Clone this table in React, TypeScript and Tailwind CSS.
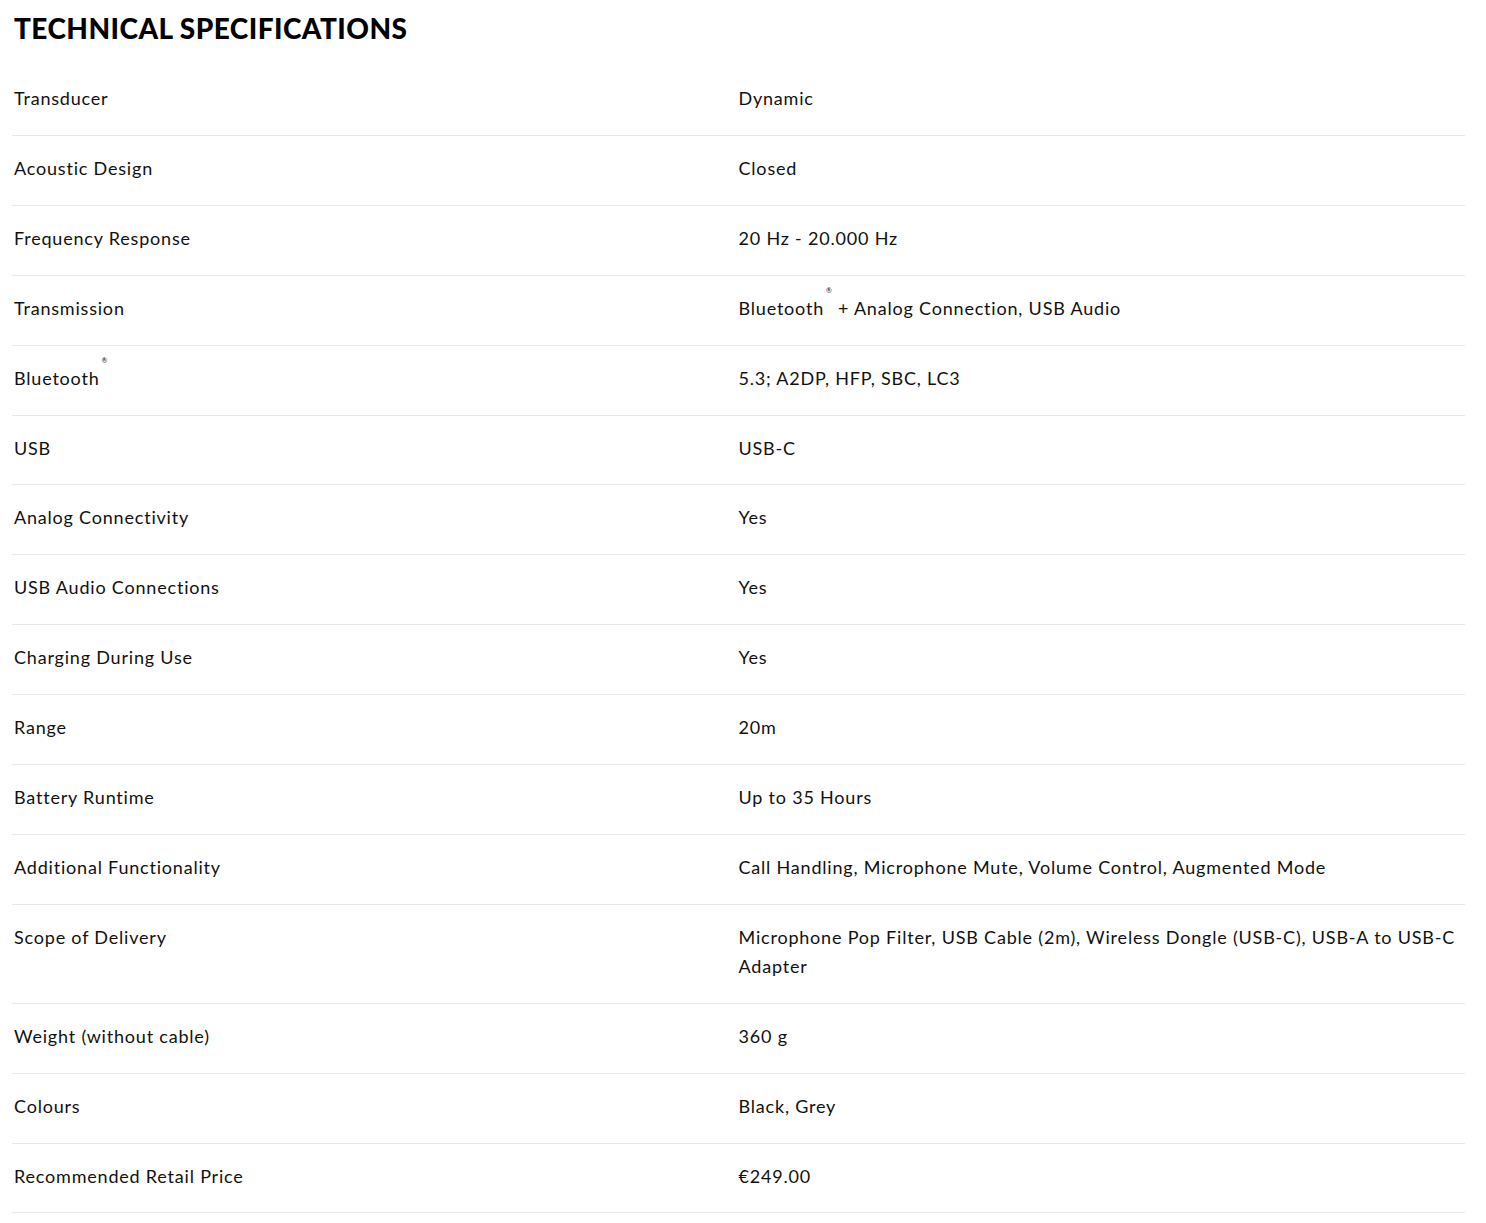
import React from "react";

type Row = { label: React.ReactNode; value: React.ReactNode };

const Reg = () => (
  <sup className="relative -top-[4px] ml-[2px] mr-[6px] text-[7px] align-top tracking-normal">®</sup>
);

const rows: Row[] = [
  { label: "Transducer", value: "Dynamic" },
  { label: "Acoustic Design", value: "Closed" },
  { label: "Frequency Response", value: "20 Hz - 20.000 Hz" },
  {
    label: "Transmission",
    value: (
      <>
        Bluetooth
        <Reg />+ Analog Connection, USB Audio
      </>
    ),
  },
  {
    label: (
      <>
        Bluetooth
        <Reg />
      </>
    ),
    value: "5.3; A2DP, HFP, SBC, LC3",
  },
  { label: "USB", value: "USB-C" },
  { label: "Analog Connectivity", value: "Yes" },
  { label: "USB Audio Connections", value: "Yes" },
  { label: "Charging During Use", value: "Yes" },
  { label: "Range", value: "20m" },
  { label: "Battery Runtime", value: "Up to 35 Hours" },
  {
    label: "Additional Functionality",
    value: "Call Handling, Microphone Mute, Volume Control, Augmented Mode",
  },
  {
    label: "Scope of Delivery",
    value:
      "Microphone Pop Filter, USB Cable (2m), Wireless Dongle (USB-C), USB-A to USB-C Adapter",
  },
  { label: "Weight (without cable)", value: "360 g" },
  { label: "Colours", value: "Black, Grey" },
  { label: "Recommended Retail Price", value: "€249.00" },
];

export default function App() {
  return (
    <div
      className="min-h-screen bg-white pl-[12px] pr-[21px] text-[#111111]"
      style={{ fontFamily: "Lato, 'Noto Sans', sans-serif" }}
    >
      <h2 className="pl-[2px] pt-[10px] text-[28px] font-black leading-[36px] tracking-[0.45px] text-black">
        TECHNICAL SPECIFICATIONS
      </h2>
      <div className="mt-[20px]">
        {rows.map((r, i) => (
          <div
            key={i}
            className="grid grid-cols-2 border-b border-[#e8e8e8] pt-[18px] pb-[22px] text-[18px] leading-[28.9px] tracking-[0.8px]"
          >
            <div className="pl-[2px] pr-6">{r.label}</div>
            <div className="pr-0">{r.value}</div>
          </div>
        ))}
      </div>
    </div>
  );
}
